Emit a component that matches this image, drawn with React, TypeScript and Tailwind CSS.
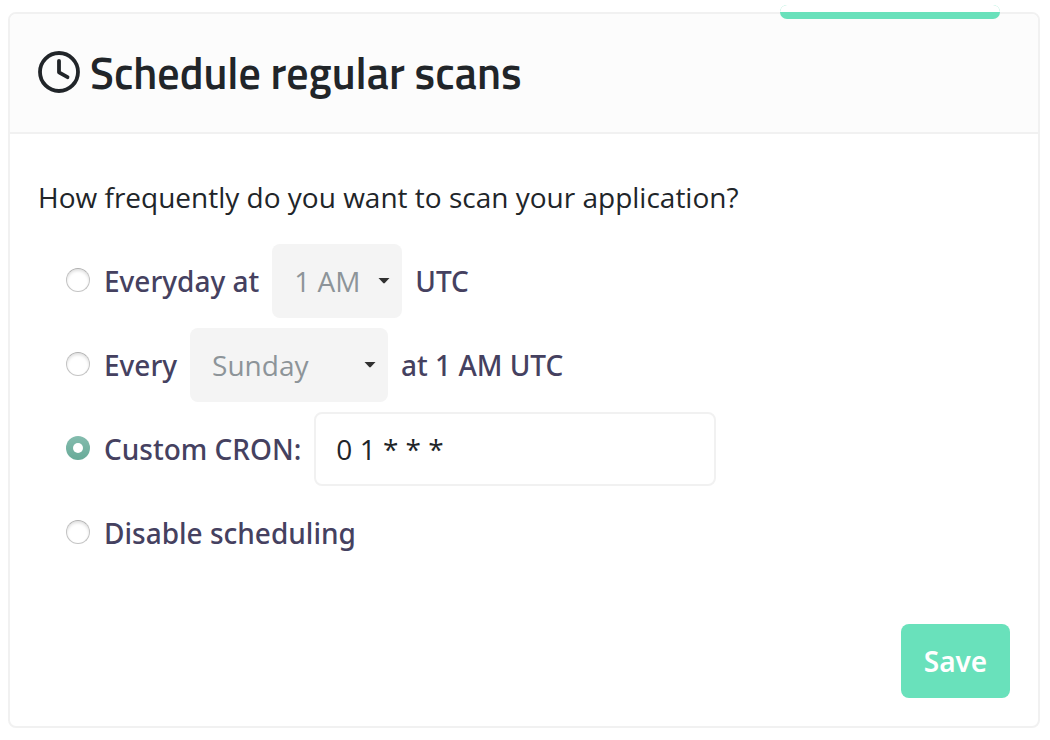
import { useState, type ReactNode } from "react";

type Mode = "daily" | "weekly" | "cron" | "off";

const hours = Array.from({ length: 24 }, (_, h) => `${h % 12 || 12} ${h < 12 ? "AM" : "PM"}`);
const days = ["Sunday", "Monday", "Tuesday", "Wednesday", "Thursday", "Friday", "Saturday"];

function ClockIcon() {
  return (
    <svg className="mb-0.5 size-[42px] shrink-0" viewBox="0 0 42 42" fill="none" stroke="currentColor" strokeLinecap="round" strokeLinejoin="round" aria-hidden="true">
      <circle cx="21" cy="21" r="19" strokeWidth="3.8" />
      <path d="M21 9.8V21.3L29.5 26.2" strokeWidth="3.8" />
    </svg>
  );
}

function Radio({ id, checked, onChange }: { id: string; checked: boolean; onChange: () => void }) {
  return (
    <input
      id={id}
      type="radio"
      name="schedule"
      checked={checked}
      onChange={onChange}
      className="mr-3.5 mb-0.5 grid size-6 shrink-0 appearance-none place-items-center rounded-full border border-[#c4c4c4] border-t-[#b0b0b0] bg-white shadow-[inset_0_2px_3px_rgba(0,0,0,0.12)] before:size-2.5 before:rounded-full checked:border-0 checked:bg-linear-to-b checked:from-[#84bcae] checked:to-[#68aa98] checked:shadow-none checked:before:bg-white"
    />
  );
}

function Dropdown({ label, options, value, onChange, className }: { label: string; options: string[]; value: string; onChange: (value: string) => void; className: string }) {
  return (
    <div className={`relative mx-[13px] ${className}`}>
      <select
        aria-label={label}
        value={value}
        onChange={(e) => onChange(e.target.value)}
        className="h-[74px] w-full appearance-none rounded-lg bg-[#f4f4f4] pl-[22px] font-['Open_Sans',sans-serif] font-normal text-[#8d9499]"
      >
        {options.map((o) => (
          <option key={o}>{o}</option>
        ))}
      </select>
      <svg className="pointer-events-none absolute top-[34px] right-3 h-1.5 w-3" viewBox="0 0 12 6" aria-hidden="true">
        <path d="M0.5 0H11.5L6.8 5Q6 5.8 5.2 5Z" fill="#303030" />
      </svg>
    </div>
  );
}

function Row({ children }: { children: ReactNode }) {
  return <div className="flex h-[74px] items-center font-['Noto_Sans',sans-serif] font-medium text-[#454160]">{children}</div>;
}

export default function App() {
  const [mode, setMode] = useState<Mode>("cron");
  const [hour, setHour] = useState("1 AM");
  const [day, setDay] = useState("Sunday");
  const [cron, setCron] = useState("0 1 * * *");

  return (
    <main className="bg-white py-3 pr-2.5 pl-2 font-['Open_Sans',sans-serif] text-[28px] leading-[42px] text-[#212529]">
      <section className="relative rounded-lg border-2 border-[#f1f1f1] bg-white">
        <div className="absolute -top-[9px] right-[38px] h-3.5 w-[220px] rounded-[7px] bg-[#69e1bb]">
          <div className="h-[7px] rounded-t-[7px] bg-white" />
        </div>
        <header className="flex h-[120px] items-center gap-2.5 rounded-t-md border-b-2 border-[#f1f1f1] bg-[#fcfcfc] px-7">
          <ClockIcon />
          <h1 className="font-['Titillium_Web','Open_Sans',sans-serif] text-[44px] leading-[48px] font-semibold">Schedule regular scans</h1>
        </header>
        <form className="px-7 pt-[42px] pb-7" onSubmit={(e) => e.preventDefault()}>
          <fieldset>
            <legend className="mb-[26px]">How frequently do you want to scan your application?</legend>
            <div className="flex flex-col gap-2.5 pl-7">
              <Row>
                <Radio id="daily" checked={mode === "daily"} onChange={() => setMode("daily")} />
                <label htmlFor="daily">Everyday at</label>
                <Dropdown label="Hour" options={hours} value={hour} onChange={setHour} className="w-[130px]" />
                <span>UTC</span>
              </Row>
              <Row>
                <Radio id="weekly" checked={mode === "weekly"} onChange={() => setMode("weekly")} />
                <label htmlFor="weekly">Every</label>
                <Dropdown label="Day" options={days} value={day} onChange={setDay} className="w-[198px]" />
                <span>at 1 AM UTC</span>
              </Row>
              <Row>
                <Radio id="cron" checked={mode === "cron"} onChange={() => setMode("cron")} />
                <label htmlFor="cron">Custom CRON:</label>
                <input
                  type="text"
                  aria-label="CRON expression"
                  value={cron}
                  onChange={(e) => setCron(e.target.value)}
                  className="ml-[13px] h-[74px] w-[402px] rounded-lg border-2 border-[#f1f1f1] bg-white px-5 font-['Open_Sans',sans-serif] font-normal text-[#212529]"
                />
              </Row>
              <Row>
                <Radio id="off" checked={mode === "off"} onChange={() => setMode("off")} />
                <label htmlFor="off">Disable scheduling</label>
              </Row>
            </div>
          </fieldset>
          <div className="mt-[54px] flex justify-end">
            <button type="submit" className="h-[74px] w-[109px] rounded-lg bg-[#69e1bb] font-['Noto_Sans',sans-serif] font-semibold text-white">
              Save
            </button>
          </div>
        </form>
      </section>
    </main>
  );
}
